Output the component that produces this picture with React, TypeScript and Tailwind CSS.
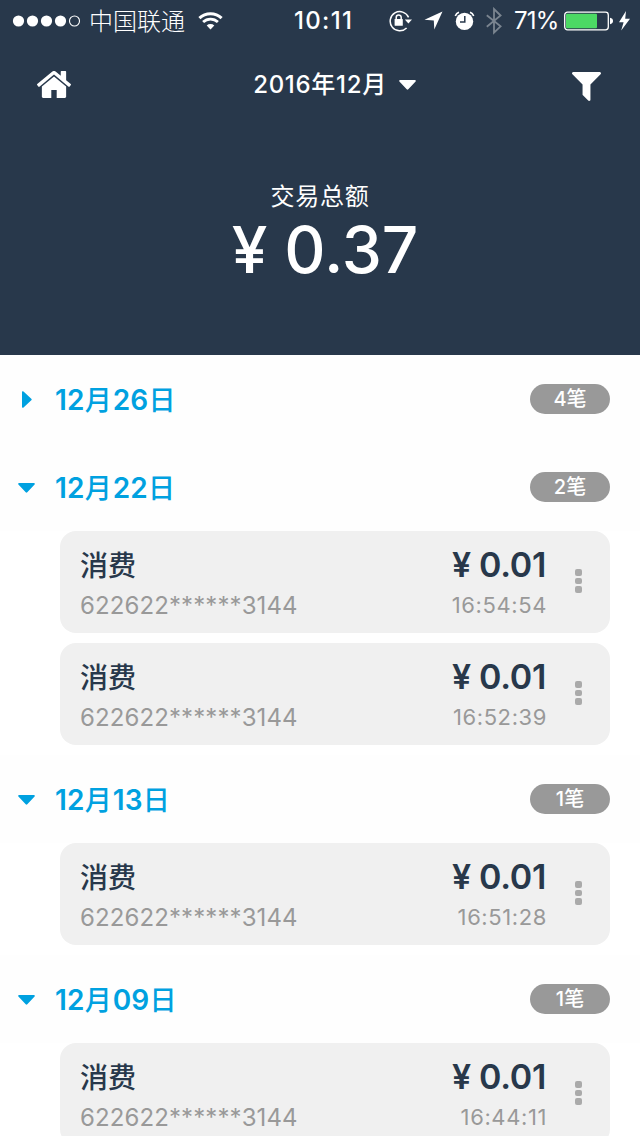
import React from "react";

type Transaction = { card: string; amount: string; time: string };
type Day = { month: string; date: string; count: string; open: boolean; items: Transaction[] };

const CARD = "622622******3144";

const days: Day[] = [
  { month: "12", date: "26", count: "4笔", open: false, items: [] },
  {
    month: "12",
    date: "22",
    count: "2笔",
    open: true,
    items: [
      { card: CARD, amount: "¥ 0.01", time: "16:54:54" },
      { card: CARD, amount: "¥ 0.01", time: "16:52:39" },
    ],
  },
  { month: "12", date: "13", count: "1笔", open: true, items: [{ card: CARD, amount: "¥ 0.01", time: "16:51:28" }] },
  { month: "12", date: "09", count: "1笔", open: true, items: [{ card: CARD, amount: "¥ 0.01", time: "16:44:11" }] },
];

function CaretDown({ className = "" }: { className?: string }) {
  return (
    <svg className={`h-[10px] w-[17px] shrink-0 ${className}`} viewBox="0 0 17 10" fill="currentColor">
      <path d="M1 0h15a.9.9 0 0 1 .6 1.5L9.3 9.3a1.1 1.1 0 0 1-1.6 0L.4 1.5A.9.9 0 0 1 1 0z" />
    </svg>
  );
}

function CaretRight() {
  return (
    <svg className="h-[17px] w-[10px] shrink-0" viewBox="0 0 10 17" fill="currentColor">
      <path d="M0 1v15a.9.9 0 0 0 1.5.6L9.3 9.3a1.1 1.1 0 0 0 0-1.6L1.5.4A.9.9 0 0 0 0 1z" />
    </svg>
  );
}

function StatusBar() {
  return (
    <div className="flex h-[41px] items-center">
      <svg className="ml-[12px] h-[14px] w-[69px] shrink-0" viewBox="0 0 69 14" fill="white">
        <circle cx="6.5" cy="7" r="5.6" />
        <circle cx="20.5" cy="7" r="5.6" />
        <circle cx="34.5" cy="7" r="5.6" />
        <circle cx="48.5" cy="7" r="5.6" />
        <circle cx="62.5" cy="7" r="5" fill="none" stroke="white" strokeWidth="1.1" />
      </svg>
      <span className="ml-[8px] w-[97px] shrink-0 pt-[2px] text-2xl leading-10 font-light">中国联通</span>
      <svg className="ml-[12px] h-[18px] w-[25px] shrink-0" viewBox="0 0 25 18" fill="none" stroke="white">
        <path d="M1.4 6.2a16 16 0 0 1 22.2 0" strokeWidth="3" />
        <path d="M5.1 10a10.7 10.7 0 0 1 14.8 0" strokeWidth="2.8" />
        <path d="M12.5 17.6l-3.8-4a5.6 5.6 0 0 1 7.6 0z" fill="white" stroke="none" />
      </svg>
      <span className="ml-[71px] w-[65px] shrink-0 pt-[1px] text-2xl leading-10 font-medium tracking-[1.3px]">10:11</span>
      <svg className="ml-[30px] h-[22px] w-[24px] shrink-0" viewBox="0 0 24 22" fill="none" stroke="white">
        <path d="M19.6 7.4A9.6 9.6 0 1 0 17.6 18" strokeWidth="1.5" />
        <path d="M15.8 9.6h7.2l-3.6 4z" fill="white" stroke="none" />
        <rect x="5.6" y="9" width="8.2" height="6.8" rx="0.6" fill="white" stroke="none" />
        <path d="M7.2 9.5V7.4a2.5 2.5 0 0 1 5 0v2.1" strokeWidth="1.5" />
      </svg>
      <svg className="ml-[11px] h-[19px] w-[19px] shrink-0" viewBox="0 0 19 19" fill="white">
        <path d="M18.5.5L10.3 18.5 9.8 9.4.5 8.7z" />
      </svg>
      <svg className="ml-[11px] h-[20px] w-[21px] shrink-0" viewBox="0 0 21 20">
        <circle cx="10.5" cy="10.4" r="8.7" fill="white" />
        <path d="M1.3 5A6 6 0 0 1 5 1.3M16 1.3A6 6 0 0 1 19.7 5" fill="none" stroke="white" strokeWidth="1.6" />
        <path d="M10.8 5v6H6" fill="none" stroke="#28384b" strokeWidth="1.5" />
      </svg>
      <svg className="ml-[11px] h-[28px] w-[16px] shrink-0 text-[#7b8590]" viewBox="0 0 16 28" fill="none" stroke="currentColor" strokeWidth="1.8">
        <path d="M.8 8.2L14.6 19.4 8 25.6V2l6.6 6.5L.8 19.8" />
      </svg>
      <span className="ml-[12px] w-[46px] shrink-0 pt-[1px] text-2xl leading-10 tracking-[-0.8px]">71%</span>
      <svg className="ml-[4px] h-[20px] w-[50px] shrink-0" viewBox="0 0 50 20" fill="none">
        <rect x=".7" y="1.2" width="43.6" height="17.6" rx="2.8" stroke="white" strokeWidth="1.3" />
        <rect x="2" y="2.7" width="31" height="14.6" rx="1" fill="#4cd964" />
        <path d="M46 6.8q3 .6 3 3.2t-3 3.2z" fill="white" />
      </svg>
      <svg className="ml-[4px] h-[20px] w-[13px] shrink-0" viewBox="0 0 13 20" fill="white">
        <path d="M8 0L1 11.2h4.6L3.2 19.6 12 7.8H7.2z" />
      </svg>
    </div>
  );
}

function Header() {
  return (
    <header className="h-[355px] bg-[#28384b] text-white">
      <StatusBar />
      <nav className="flex h-[88px] items-center justify-between pr-[39px] pl-[37px]">
        <svg className="mb-[1px] h-[27px] w-[34px] shrink-0" viewBox="25 256 1614 1280" fill="currentColor">
          <path d="M1408 992v480q0 26-19 45t-45 19h-384v-384h-256v384h-384q-26 0-45-19t-19-45v-480q0-1 .5-3t.5-3l575-474 575 474q1 2 1 6zm223-69l-62 74q-8 9-21 11h-3q-13 0-21-7l-692-577-692 577q-12 8-24 7-13-2-21-11l-62-74q-8-10-7-23.5t11-21.5l719-599q32-26 76-26t76 26l244 204v-195q0-14 9-23t23-9h192q14 0 23 9t9 23v408l219 182q10 8 11 21.5t-7 23.5z" />
        </svg>
        <button className="ml-[26px] flex items-center gap-[12px] text-2xl leading-9 font-medium tracking-[0.7px]">
          2016年12月
          <CaretDown />
        </button>
        <svg className="mt-[2px] h-[29px] w-[29px] shrink-0" viewBox="190 256 1412 1408" fill="currentColor">
          <path d="M1595 295q17 41-14 70l-493 493v742q0 42-39 59-13 5-25 5-27 0-45-19l-256-256q-19-19-19-45v-486l-493-493q-31-29-14-70 17-39 59-39h1280q42 0 59 39z" />
        </svg>
      </nav>
      <div className="flex flex-col items-center pt-[50px]">
        <p className="text-2xl leading-9 tracking-[0.8px]">交易总额</p>
        <p className="mt-[-1px] pl-[10px] text-[64px] leading-[72px] font-medium">¥ 0.37</p>
      </div>
    </header>
  );
}

function TransactionCard({ item }: { item: Transaction }) {
  return (
    <li className="flex h-[102px] rounded-2xl bg-[#f0f0f0] pr-[28px] pl-[20px]">
      <div className="flex-1">
        <p className="mt-[15px] text-[28px] leading-[40px] font-medium text-[#28384b]">消费</p>
        <p className="text-2xl leading-[40px] tracking-[0.1px] text-[#999]">{item.card}</p>
      </div>
      <div className="text-right">
        <p className="mt-[14px] pr-[1px] text-[34px] leading-[40px] font-semibold tracking-[-0.3px] text-[#28384b]">{item.amount}</p>
        <p className="text-[22px] leading-[40px] tracking-[0.6px] text-[#999]">{item.time}</p>
      </div>
      <div className="mt-[38px] ml-[28px] flex w-[7px] flex-col gap-[2px]">
        <i className="h-[6.6px] rounded-[2px] bg-[#aaa]" />
        <i className="h-[6.6px] rounded-[2px] bg-[#aaa]" />
        <i className="h-[6.6px] rounded-[2px] bg-[#aaa]" />
      </div>
    </li>
  );
}

function DaySection({ day }: { day: Day }) {
  return (
    <section>
      <div className="flex h-[88px] items-center bg-[#fefefe] pr-[30px] pl-[18px] text-[#00a1e0]">
        <div className="flex w-[37px] justify-center pt-[1px] pr-[20px]">{day.open ? <CaretDown /> : <CaretRight />}</div>
        <h2 className="flex-1 pt-[2px] text-[28px] leading-10 font-semibold tracking-[0.2px]">
          {day.month}
          <span className="text-[27px] font-medium tracking-[1px]">月</span>
          {day.date}
          <span className="text-[27px] font-medium">日</span>
        </h2>
        <span className="h-[30px] w-[80px] rounded-full bg-[#999] text-center text-xl leading-[30px] font-medium text-white">
          {day.count}
        </span>
      </div>
      {day.open && (
        <ul className="flex flex-col gap-[10px] pr-[30px] pb-[10px] pl-[60px]">
          {day.items.map((item) => (
            <TransactionCard key={item.time} item={item} />
          ))}
        </ul>
      )}
    </section>
  );
}

export default function App() {
  return (
    <main className="h-[1136px] w-[640px] overflow-hidden bg-white font-['Inter','Noto_Sans_CJK_SC',sans-serif]">
      <Header />
      {days.map((day) => (
        <DaySection key={day.month + day.date} day={day} />
      ))}
    </main>
  );
}
